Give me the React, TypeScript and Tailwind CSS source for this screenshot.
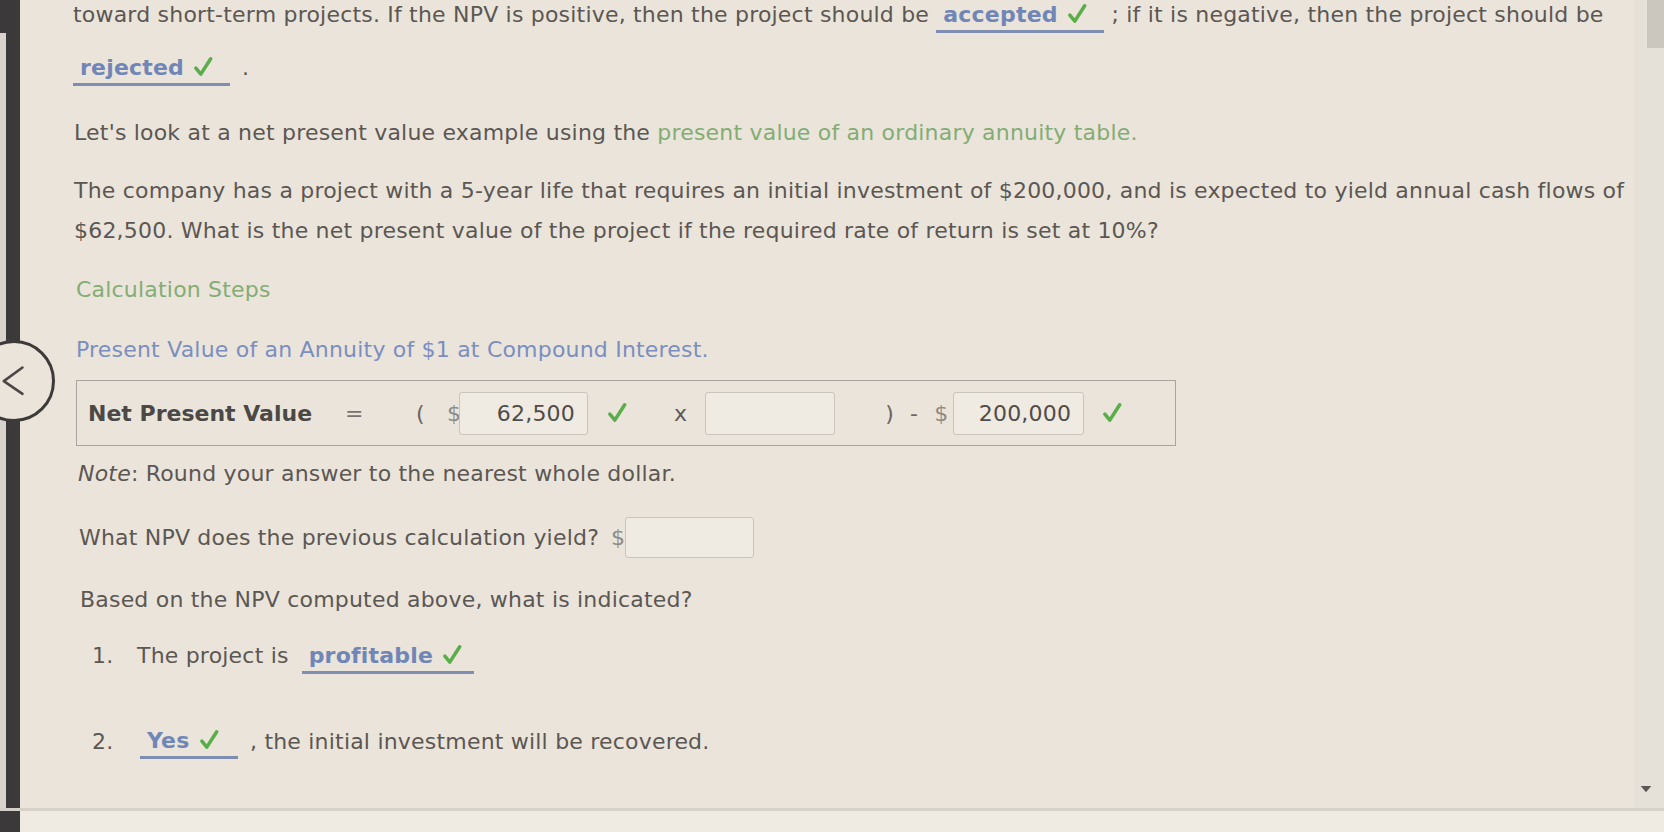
import React from 'react'

const font = { fontFamily: '"DejaVu Sans", Verdana, sans-serif' }

function Check({ className = '' }: { className?: string }) {
  return (
    <svg viewBox="0 0 20 20" className={`inline-block h-[22px] w-[22px] ${className}`} aria-hidden>
      <path d="M3.5 11 L8 16.5 L17 2.5" fill="none" stroke="#5aae4a" strokeWidth="3.2" strokeLinecap="round" strokeLinejoin="round" />
    </svg>
  )
}

function Answer({ text, width }: { text: string; width: string }) {
  return (
    <span className={`inline-flex items-center ${width} border-b-[3px] border-[#7d8eb0] pl-[7px] leading-[30px] align-baseline`}>
      <span className="font-bold text-[#6f86b6]">{text}</span>
      <Check className="ml-[8px] -mt-[2px]" />
    </span>
  )
}

function Field({ value, width }: { value?: string; width: string }) {
  return (
    <div
      className={`${width} h-[43px] rounded-[3px] border border-[#c9c4bc] bg-[#efeae2] flex items-center justify-end pr-[12px] text-[#4f4c49]`}
    >
      {value}
    </div>
  )
}

export default function App() {
  return (
    <div style={font} className="w-[1664px] h-[832px] overflow-hidden bg-[#ebe4db] text-[22px] tracking-[0.2px] text-[#5b5753] flex flex-col">
      <div className="flex h-[808px] relative">
        {/* left rail */}
        <div className="w-[20px] shrink-0 bg-[#3b393a] relative">
          <div className="absolute left-0 top-[33px] bottom-0 w-[6px] bg-[#d8d3cd]" />
        </div>
        {/* back circle overlay */}
        <div className="absolute left-[-27px] top-[340px] w-[82px] h-[82px] rounded-full border-[3px] border-[#3d3a3a] bg-[#ebe4db] z-10">
          <svg viewBox="0 0 30 40" className="absolute left-[25px] top-[22px] w-[26px] h-[34px]">
            <path d="M25 3 L3 19 L25 34" fill="none" stroke="#4a4646" strokeWidth="3" strokeLinecap="round" strokeLinejoin="round" />
          </svg>
        </div>

        {/* content */}
        <div className="flex-1 pl-[53px] pr-[10px]">
          <p className="-mt-[12px] leading-[53px] whitespace-nowrap">
            toward short-term projects. If the NPV is positive, then the project should be{' '}
            <Answer text="accepted" width="w-[168px]" /> ; if it is negative, then the project should be
            <br />
            <Answer text="rejected" width="w-[157px]" />
            <span className="ml-[12px]">.</span>
          </p>

          <p className="mt-[19px] leading-[40px] pl-[1px] whitespace-nowrap">
            Let's look at a net present value example using the{' '}
            <span className="text-[#82ad73]">present value of an ordinary annuity table.</span>
          </p>

          <p className="mt-[18px] leading-[40px] pl-[1px] whitespace-nowrap">
            The company has a project with a 5-year life that requires an initial investment of $200,000, and is expected to yield annual cash flows of
            <br />
            $62,500. What is the net present value of the project if the required rate of return is set at 10%?
          </p>

          <p className="mt-[19px] leading-[40px] pl-[3px] text-[#83ad75]">Calculation Steps</p>

          <p className="mt-[20px] leading-[40px] pl-[3px] text-[#7a8ebf]">Present Value of an Annuity of $1 at Compound Interest.</p>

          <div className="mt-[10px] ml-[3px] w-[1100px] h-[66px] border border-[#a9a49d] flex items-center pl-[11px]">
            <span className="w-[257px] font-bold text-[#4b4845] tracking-normal">Net Present Value</span>
            <span className="w-[71px] text-[#777370]">=</span>
            <span className="w-[31px] text-[#6a6662]">(</span>
            <span className="w-[12px] text-[#8e8a86]">$</span>
            <Field value="62,500" width="w-[129px]" />
            <Check className="ml-[18px]" />
            <span className="ml-[46px] text-[#5d5955]">x</span>
            <div className="ml-[18px]"><Field width="w-[130px]" /></div>
            <span className="ml-[50px] text-[#6a6662]">)</span>
            <span className="ml-[16px] text-[#6a6662]">-</span>
            <span className="ml-[16px] w-[19px] text-[#8e8a86]">$</span>
            <Field value="200,000" width="w-[131px]" />
            <Check className="ml-[17px]" />
          </div>

          <p className="mt-[8px] leading-[40px] pl-[5px]">
            <span className="italic">Note</span>: Round your answer to the nearest whole dollar.
          </p>

          <div className="mt-[23px] h-[41px] flex items-center pl-[6px]">
            <span>What NPV does the previous calculation yield?</span>
            <span className="ml-[12px] text-[#8e8a86]">$</span>
            <div className="w-[129px] h-[41px] rounded-[3px] border border-[#c9c4bc] bg-[#efeae2]" />
          </div>

          <p className="mt-[22px] leading-[40px] pl-[7px]">Based on the NPV computed above, what is indicated?</p>

          <div className="mt-[16px] leading-[40px] flex items-center pl-[19px]">
            <span className="w-[45px]">1.</span>
            <span>The project is</span>
            <span className="ml-[13px]">
              <Answer text="profitable" width="w-[172px]" />
            </span>
          </div>

          <div className="mt-[46px] leading-[40px] flex items-center pl-[19px]">
            <span className="w-[48px]">2.</span>
            <Answer text="Yes" width="w-[98px]" />
            <span className="ml-[12px]">, the initial investment will be recovered.</span>
          </div>
        </div>

        {/* scrollbar */}
        <div className="w-[30px] shrink-0 bg-[#e6e1d8] relative">
          <div className="absolute right-0 top-0 w-[17px] h-[48px] bg-[#cbc6be]" />
          <svg viewBox="0 0 12 8" className="absolute left-[6px] top-[786px] w-[12px] h-[7px]">
            <path d="M0 0 L12 0 L6 7 Z" fill="#5a5754" />
          </svg>
        </div>
      </div>
      <div className="h-[3px] bg-[#d6d1c8]" />
      <div className="flex-1 bg-[#efebe3] flex">
        <div className="w-[20px] bg-[#3b393a]" />
      </div>
    </div>
  )
}
